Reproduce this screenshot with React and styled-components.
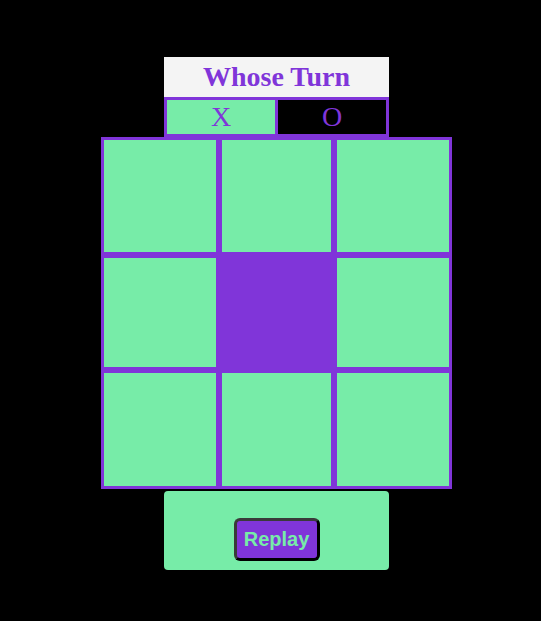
import React, { useState } from "react";
import styled, { createGlobalStyle } from "styled-components";

const purple = "#8035d9";
const green = "#77eca8";

const Global = createGlobalStyle`
  html, body {
    margin: 0;
    padding: 0;
    background: #000;
  }
  #root {
    min-height: 621px;
  }
`;

const Page = styled.div`
  min-height: 621px;
  box-sizing: border-box;
  padding: 57px 0 0 12px;
  display: flex;
  flex-direction: column;
  align-items: center;
`;

const Header = styled.h1`
  width: 225px;
  height: 40px;
  margin: 0;
  background: #f4f4f4;
  color: ${purple};
  font-family: "Liberation Serif", "Times New Roman", serif;
  font-weight: bold;
  font-size: 28px;
  line-height: 40px;
  text-align: center;
`;

const TurnRow = styled.div`
  width: 225px;
  height: 40px;
  box-sizing: border-box;
  display: grid;
  grid-template-columns: 1fr 1fr;
  gap: 3px;
  padding: 3px;
  background: ${purple};
`;

const TurnBox = styled.div`
  background: ${({ $active }) => ($active ? green : "#000")};
  color: ${purple};
  font-family: "Liberation Serif", "Times New Roman", serif;
  font-size: 28px;
  line-height: 34px;
  text-align: center;
`;

const Board = styled.div`
  display: grid;
  grid-template-columns: 118px 115px 118px;
  grid-template-rows: 118px 115px 119px;
`;

const Cell = styled.div`
  box-sizing: border-box;
  border: 3px solid ${purple};
  background: ${({ $hover }) => ($hover ? purple : green)};
  cursor: pointer;
`;

const Footer = styled.div`
  width: 225px;
  height: 79px;
  box-sizing: border-box;
  margin-top: 2px;
  padding-top: 27px;
  background: ${green};
  border-radius: 4px;
  display: flex;
  justify-content: center;
  align-items: flex-start;
`;

const ReplayButton = styled.button`
  width: 86px;
  height: 43px;
  box-sizing: border-box;
  background: ${purple};
  color: ${green};
  border: 3px outset #3a3a3a;
  border-radius: 6px;
  font-family: "Liberation Sans", Arial, sans-serif;
  font-weight: bold;
  font-size: 20px;
  padding: 0;
  cursor: pointer;
`;

export default function App() {
  const [hover, setHover] = useState(4);
  return (
    <>
      <Global />
      <Page>
        <Header>Whose Turn</Header>
        <TurnRow>
          <TurnBox $active>X</TurnBox>
          <TurnBox>O</TurnBox>
        </TurnRow>
        <Board>
          {Array.from({ length: 9 }, (_, i) => (
            <Cell key={i} $hover={hover === i} onMouseEnter={() => setHover(i)} />
          ))}
        </Board>
        <Footer>
          <ReplayButton>Replay</ReplayButton>
        </Footer>
      </Page>
    </>
  );
}
